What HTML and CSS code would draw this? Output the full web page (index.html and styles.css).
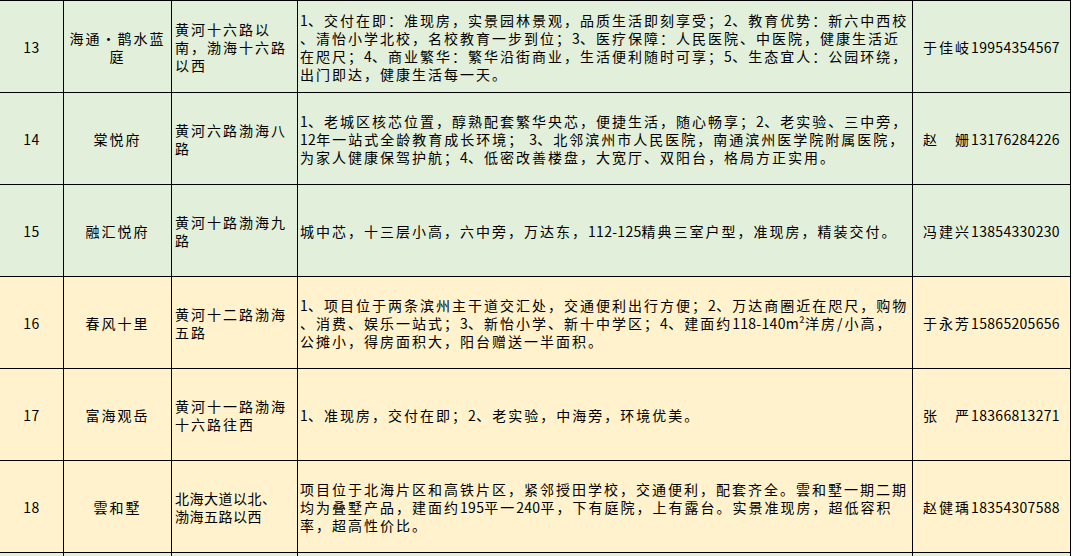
FILE: index.html
```html
<!DOCTYPE html>
<html lang="zh-CN">
<head>
<meta charset="utf-8">
<title>楼盘信息表</title>
<link rel="stylesheet" href="styles.css">
</head>
<body>
<div class="sheet">
  <div class="row g">
    <div class="c no"><p>13</p></div>
    <div class="c name"><p>海通•鹊水蓝<br>庭</p></div>
    <div class="c addr"><p>黄河十六路以<br>南，渤海十六路<br>以西</p></div>
    <div class="c desc"><p><span class="num">1</span>、交付在即：准现房，实景园林景观，品质生活即刻享受；<span class="num">2</span>、教育优势：新六中西校<br>、清怡小学北校，名校教育一步到位；<span class="num">3</span>、医疗保障：人民医院、中医院，健康生活近<br>在咫尺；<span class="num">4</span>、商业繁华：繁华沿街商业，生活便利随时可享；<span class="num">5</span>、生态宜人：公园环绕，<br>出门即达，健康生活每一天。</p></div>
    <div class="c tel"><p>于佳岐<span class="num">19954354567</span></p></div>
  </div>
  <div class="row g">
    <div class="c no"><p>14</p></div>
    <div class="c name"><p>棠悦府</p></div>
    <div class="c addr"><p>黄河六路渤海八<br>路</p></div>
    <div class="c desc"><p><span class="num">1</span>、老城区核芯位置，醇熟配套繁华央芯，便捷生活，随心畅享；<span class="num">2</span>、老实验、三中旁，<br><span class="num">12</span>年一站式全龄教育成长环境； <span class="num">3</span>、北邻滨州市人民医院，南通滨州医学院附属医院，<br>为家人健康保驾护航；<span class="num">4</span>、低密改善楼盘，大宽厅、双阳台，格局方正实用。</p></div>
    <div class="c tel"><p>赵　姗<span class="num">13176284226</span></p></div>
  </div>
  <div class="row g">
    <div class="c no"><p>15</p></div>
    <div class="c name"><p>融汇悦府</p></div>
    <div class="c addr"><p>黄河十路渤海九<br>路</p></div>
    <div class="c desc"><p>城中芯，十三层小高，六中旁，万达东，<span class="num">112-125</span>精典三室户型，准现房，精装交付。</p></div>
    <div class="c tel"><p>冯建兴<span class="num">13854330230</span></p></div>
  </div>
  <div class="row y">
    <div class="c no"><p>16</p></div>
    <div class="c name"><p>春风十里</p></div>
    <div class="c addr"><p>黄河十二路渤海<br>五路</p></div>
    <div class="c desc"><p><span class="num">1</span>、项目位于两条滨州主干道交汇处，交通便利出行方便；<span class="num">2</span>、万达商圈近在咫尺，购物<br>、消费、娱乐一站式；<span class="num">3</span>、新怡小学、新十中学区；<span class="num">4</span>、建面约<span class="num">118-140m²</span>洋房/小高，<br>公摊小，得房面积大，阳台赠送一半面积。</p></div>
    <div class="c tel"><p>于永芳<span class="num">15865205656</span></p></div>
  </div>
  <div class="row y">
    <div class="c no"><p>17</p></div>
    <div class="c name"><p>富海观岳</p></div>
    <div class="c addr"><p>黄河十一路渤海<br>十六路往西</p></div>
    <div class="c desc"><p><span class="num">1</span>、准现房，交付在即；<span class="num">2</span>、老实验，中海旁，环境优美。</p></div>
    <div class="c tel"><p>张　严<span class="num">18366813271</span></p></div>
  </div>
  <div class="row y">
    <div class="c no"><p>18</p></div>
    <div class="c name"><p>雲和墅</p></div>
    <div class="c addr tight"><p>北海大道以北、<br>渤海五路以西</p></div>
    <div class="c desc"><p>项目位于北海片区和高铁片区，紧邻授田学校，交通便利，配套齐全。雲和墅一期二期<br>均为叠墅产品，建面约<span class="num">195</span>平一<span class="num">240</span>平，下有庭院，上有露台。实景准现房，超低容积<br>率，超高性价比。</p></div>
    <div class="c tel"><p>赵健瑀<span class="num">18354307588</span></p></div>
  </div>
  <div class="row g">
    <div class="c no"></div>
    <div class="c name"></div>
    <div class="c addr"></div>
    <div class="c desc"></div>
    <div class="c tel"></div>
  </div>
</div>
</body>
</html>
```

FILE: styles.css
```css
html, body {
  margin: 0;
  padding: 0;
  background: #ffffff;
}

body {
  font-family: "Noto Sans CJK SC", "Noto Sans", sans-serif;
  font-size: 14px;
  color: #000000;
  overflow: hidden;
}

.sheet {
  display: grid;
  grid-template-columns: 63px 107px 125px 614px 157px;
  grid-auto-rows: 91px;
  gap: 1px;
  width: 1070px;
  background: #000000;
  border-top: 1px solid #000000;
  border-right: 1px solid #000000;
}

.row {
  display: contents;
}

.g .c {
  background: #e2efda;
}

.y .c {
  background: #fff2cc;
}

.c {
  display: flex;
  align-items: center;
  letter-spacing: 2px;
  line-height: 18px;
  white-space: nowrap;
  overflow: hidden;
}

.c p {
  margin: 0;
}

.no,
.name,
.tel {
  justify-content: center;
  text-align: center;
}

.no {
  letter-spacing: 0.5px;
}

.addr {
  padding-left: 3px;
}

.addr.tight {
  letter-spacing: 0.5px;
}

.desc {
  padding-left: 2px;
}

.num {
  letter-spacing: 0.3px;
}
```
